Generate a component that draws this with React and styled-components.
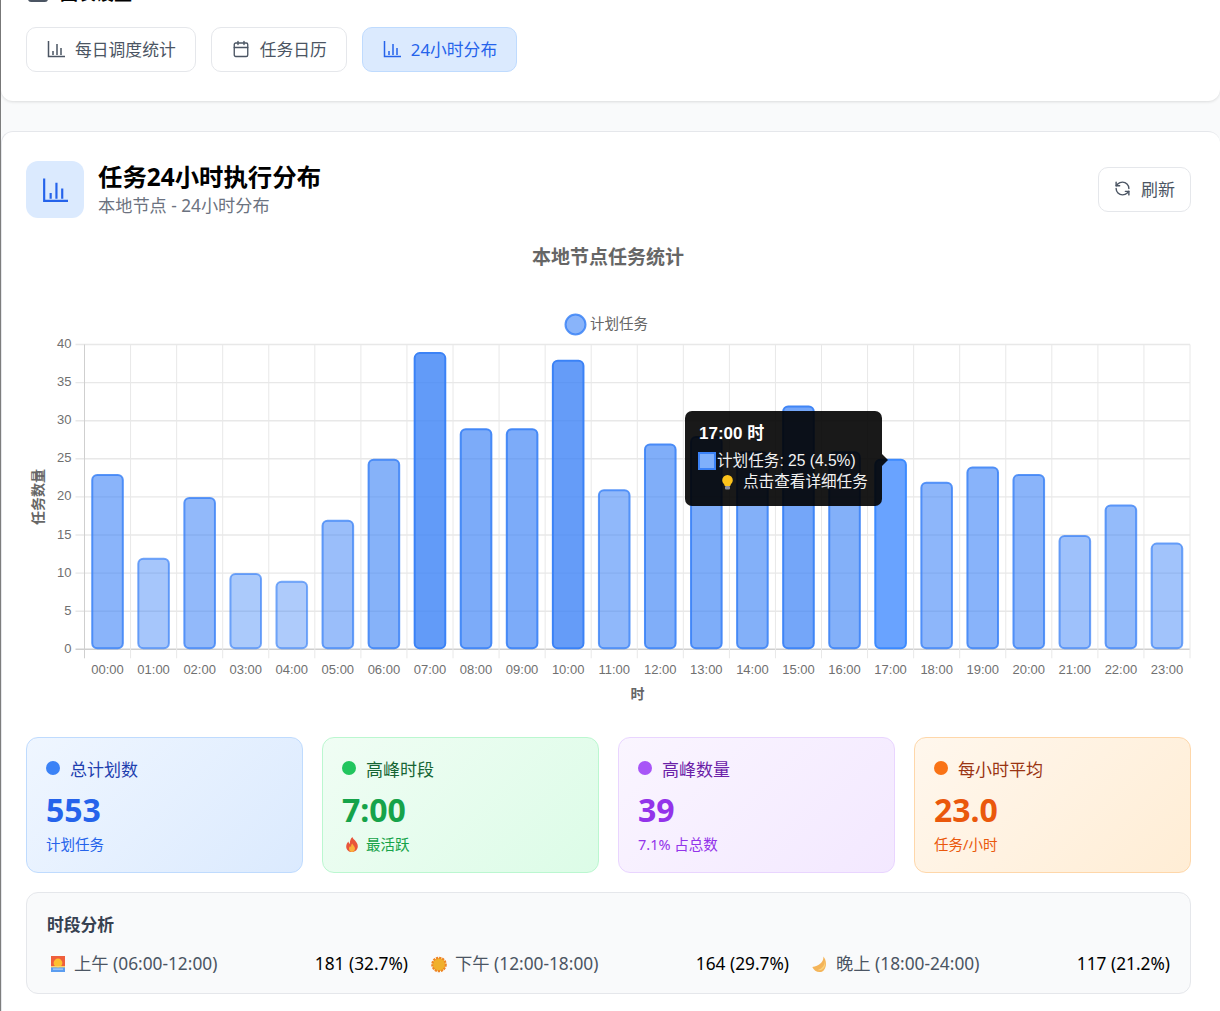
import styled, { createGlobalStyle } from 'styled-components';
import { Calendar, RefreshCcw } from 'lucide-react';

const FONT = '"Noto Sans", "Noto Sans CJK SC", sans-serif';
const CHART_FONT = '"Liberation Sans", "Noto Sans CJK SC", sans-serif';

const hours = [23, 12, 20, 10, 9, 17, 25, 39, 29, 29, 38, 21, 27, 28, 26, 32, 26, 25, 22, 24, 23, 15, 19, 14];
const ticks = [0, 5, 10, 15, 20, 25, 30, 35, 40];

const PLOT_LEFT = 84.5;
const PLOT_RIGHT = 1190;
const PLOT_TOP = 344.5;
const PLOT_BOTTOM = 649.3;
const COL = (PLOT_RIGHT - PLOT_LEFT) / 24;
const UNIT = (PLOT_BOTTOM - PLOT_TOP) / 40;

const stats = [
  { tone: 'blue', label: '总计划数', value: '553', note: '计划任务' },
  { tone: 'green', label: '高峰时段', value: '7:00', note: '最活跃', fire: true },
  { tone: 'purple', label: '高峰数量', value: '39', note: '7.1% 占总数' },
  { tone: 'orange', label: '每小时平均', value: '23.0', note: '任务/小时' },
];

const tones = {
  blue: { from: '#eff6ff', to: '#dbeafe', line: '#bfdbfe', dot: '#3b82f6', label: '#1e40af', value: '#2563eb' },
  green: { from: '#f0fdf4', to: '#dcfce7', line: '#bbf7d0', dot: '#22c55e', label: '#166534', value: '#16a34a' },
  purple: { from: '#faf5ff', to: '#f3e8ff', line: '#e9d5ff', dot: '#a855f7', label: '#6b21a8', value: '#9333ea' },
  orange: { from: '#fff7ed', to: '#ffedd5', line: '#fed7aa', dot: '#f97316', label: '#9a3412', value: '#ea580c' },
};

const periods = [
  { icon: 'sunrise', label: '上午 (06:00-12:00)', value: '181 (32.7%)' },
  { icon: 'sun', label: '下午 (12:00-18:00)', value: '164 (29.7%)' },
  { icon: 'moon', label: '晚上 (18:00-24:00)', value: '117 (21.2%)' },
];

function BarsIcon({ size = 18 }) {
  return (
    <svg width={size} height={size} viewBox="0 0 18 18" fill="none" stroke="currentColor" strokeWidth="1.5">
      <path d="M1.5 1v15.5H18" />
      <path d="M6 15v-4M10 15V4M14 15V8" />
    </svg>
  );
}

function Sunrise() {
  return (
    <svg width="14" height="16" viewBox="0 0 14 16">
      <rect width="14" height="16" fill="#ef5f3c" />
      <rect y="10" width="14" height="6" fill="#5b9df0" />
      <circle cx="7" cy="7" r="4.4" fill="#fdc02f" />
      <rect y="10" width="14" height="1.4" fill="#fbd36b" />
      <rect x="2" y="12.6" width="10" height="1" fill="#bfdcf8" />
    </svg>
  );
}

function Sun() {
  return (
    <svg width="16" height="17" viewBox="0 0 16 17">
      <circle cx="8" cy="8.5" r="6.6" fill="#f4b62e" stroke="#ee8524" strokeWidth="2.4" strokeDasharray="2.2 0.9" />
      <circle cx="8" cy="8.5" r="5.6" fill="#f0b02c" />
    </svg>
  );
}

function Moon() {
  return (
    <svg width="15" height="17" viewBox="0 0 15 17">
      <path d="M11.200.4c1.100 4.600-3.300 9.600-10.900 10.700 1.500 3.700 5.400 5.700 8.900 4.800C14.300 14.500 15.800 5 11.200.4z" fill="#f4b459" />
      <path d="M12.800 4c.6 4-2 8.600-7 10 3 1 6.300-.6 7.200-4.200.4-2 .3-4-.2-5.800z" fill="#f9d27d" />
    </svg>
  );
}

function Fire() {
  return (
    <FireIcon width="12" height="15" viewBox="1 0 12 15">
      <path d="M7.400 0c.6 2.600 5.400 4.600 5.400 9.200 0 3.300-2.600 5.800-5.800 5.800S1.200 12.600 1.200 9.400c0-2.300 1.200-3.800 2.200-5 .2 1.300.7 2 1.500 2.400C4.700 4 5.600 1.600 7.400 0z" fill="#e8553a" />
      <path d="M7.200 6.500c.4 1.500 2.800 2.500 2.800 5 0 1.900-1.300 3.500-3 3.500s-3-1.400-3-3.200c0-1.200.6-2 1.200-2.700.2.600.5 1 .9 1.200-.1-1.400.2-2.800 1.100-3.800z" fill="#fbb03b" />
    </FireIcon>
  );
}

function Bulb() {
  return (
    <svg width="11" height="15" viewBox="0 0 11 15">
      <path d="M5.500 0a5.300 5.300 0 0 1 5.300 5.300c0 2-1.200 3-2 4.300-.3.500-.4 1-.5 1.400H2.700c-.1-.5-.2-.9-.5-1.400C1.400 8.300.2 7.300.2 5.300A5.300 5.300 0 0 1 5.500 0z" fill="#fcc21b" />
      <rect x="3" y="11" width="5" height="3.400" rx="1" fill="#8a8fa0" />
    </svg>
  );
}

const periodIcons = { sunrise: Sunrise, sun: Sun, moon: Moon };

function HourChart() {
  return (
    <ChartSvg viewBox="26 240 1165 472">
      <ChartTitle x="608" y="263.500" textAnchor="middle">本地节点任务统计</ChartTitle>

      <circle cx="575.500" cy="324.500" r="10" fill="rgba(59,130,246,0.6)" stroke="rgba(59,130,246,0.85)" strokeWidth="2" />
      <LegendText x="590" y="328.500">计划任务</LegendText>

      {ticks.map((t) => {
        const y = PLOT_BOTTOM - t * UNIT;
        return (
          <g key={t}>
            <GridLine x1={PLOT_LEFT - 9} x2={PLOT_RIGHT} y1={y} y2={y} $axis={t === 0} $wide />
            <TickText x={PLOT_LEFT - 13} y={y + 3.500} textAnchor="end">{t}</TickText>
          </g>
        );
      })}
      {hours.map((_, i) => (
        <GridLine key={i} x1={PLOT_LEFT + i * COL} x2={PLOT_LEFT + i * COL} y1={PLOT_TOP} y2={PLOT_BOTTOM + 9} $axis={i === 0} />
      ))}
      <GridLine x1={PLOT_RIGHT} x2={PLOT_RIGHT} y1={PLOT_TOP} y2={PLOT_BOTTOM + 9} />

      {hours.map((v, i) => {
        const alpha = 0.3 + (0.5 * v) / 39;
        const hovered = i === 17;
        const cx = PLOT_LEFT + (i + 0.5) * COL;
        const top = PLOT_BOTTOM - v * UNIT;
        return (
          <g key={i}>
            <rect
              x={cx - 15.300}
              y={top + 1}
              width="30.600"
              height={v * UNIT - 2}
              rx="5"
              fill={hovered ? '#69a3ff' : `rgba(59,130,246,${alpha})`}
              stroke={hovered ? '#3c8aff' : `rgba(59,130,246,${Math.min(alpha + 0.25, 1)})`}
              strokeWidth="2"
            />
            <TickText x={cx} y="674" textAnchor="middle">{String(i).padStart(2, '0')}:00</TickText>
          </g>
        );
      })}

      <AxisTitle x="637.500" y="699" textAnchor="middle">时</AxisTitle>
      <AxisTitle textAnchor="middle" transform="translate(43 497) rotate(-90)">任务数量</AxisTitle>
    </ChartSvg>
  );
}

export default function App() {
  return (
    <>
      <GlobalStyle />
      <Page>
        <TopCard>
          <Heading>
            <HeadingIcon />
            图表设置
          </Heading>
          <Tabs>
            <Tab><BarsIcon />每日调度统计</Tab>
            <Tab><Calendar size={18} strokeWidth={1.800} />任务日历</Tab>
            <Tab $active><BarsIcon />24小时分布</Tab>
          </Tabs>
        </TopCard>

        <MainCard>
          <Header>
            <HeaderLeft>
              <IconBox><BarsIcon size={26} /></IconBox>
              <div>
                <Title>任务24小时执行分布</Title>
                <Subtitle>本地节点 - 24小时分布</Subtitle>
              </div>
            </HeaderLeft>
            <RefreshButton><RefreshCcw size={17} strokeWidth={2} />刷新</RefreshButton>
          </Header>

          <ChartWrap>
            <HourChart />
            <Tooltip>
              <TipTitle>17:00 时</TipTitle>
              <TipLine><TipSwatch />计划任务: 25 (4.5%)</TipLine>
              <TipHint><Bulb />点击查看详细任务</TipHint>
            </Tooltip>
          </ChartWrap>

          <StatGrid>
            {stats.map((s) => (
              <StatCard key={s.label} $tone={s.tone}>
                <StatLabel $tone={s.tone}><StatDot $tone={s.tone} />{s.label}</StatLabel>
                <StatValue $tone={s.tone}>{s.value}</StatValue>
                <StatNote $tone={s.tone}>{s.fire && <Fire />}{s.note}</StatNote>
              </StatCard>
            ))}
          </StatGrid>

          <Analysis>
            <AnalysisTitle>时段分析</AnalysisTitle>
            <PeriodGrid>
              {periods.map((p) => {
                const Icon = periodIcons[p.icon];
                return (
                  <Period key={p.icon}>
                    <PeriodLabel><PeriodIcon><Icon /></PeriodIcon>{p.label}</PeriodLabel>
                    <PeriodValue>{p.value}</PeriodValue>
                  </Period>
                );
              })}
            </PeriodGrid>
          </Analysis>
        </MainCard>
      </Page>
    </>
  );
}

const GlobalStyle = createGlobalStyle`
  html, body {
    margin: 0;
    height: 100%;
    overflow: hidden;
    background: #f9fafb;
  }
  body {
    font-family: ${FONT};
  }
  * {
    box-sizing: border-box;
  }
`;

// the screenshot is scrolled a bit, so the page starts above the window
const Page = styled.div`
  width: 1220px;
  margin-top: -50px;
  border-left: 1px solid #7d7d7d;
  background: #f9fafb;
  display: flex;
  flex-direction: column;
  gap: 30px;
`;

const TopCard = styled.section`
  height: 151px;
  padding: 27px 28px 0 25px;
  background: #fff;
  border-radius: 0 0 12px 12px;
  box-shadow: 0 1px 3px rgba(0, 0, 0, 0.12);
`;

const Heading = styled.h2`
  margin: 0 0 18px;
  height: 32px;
  display: flex;
  align-items: center;
  gap: 12px;
  font-size: 18px;
  line-height: 32px;
  font-weight: 700;
  color: #000;
`;

const HeadingIcon = styled.span`
  width: 20px;
  height: 18px;
  margin-left: 2px;
  border: 2px solid #4b5563;
  border-radius: 3px;
`;

const Tabs = styled.div`
  display: flex;
  gap: 15px;
`;

const Tab = styled.button`
  height: 45px;
  padding: 0 19px 1px 20px;
  display: flex;
  align-items: center;
  gap: 10px;
  font-family: ${FONT};
  font-size: 16.800px;
  border-radius: 10px;
  border: 1px solid ${(p) => (p.$active ? '#bfdbfe' : '#e5e7eb')};
  background: ${(p) => (p.$active ? '#dbeafe' : '#fff')};
  color: ${(p) => (p.$active ? '#2563eb' : '#4b5563')};
`;

const MainCard = styled.section`
  padding: 29px 29px 17px 24px;
  background: #fff;
  border: 1px solid #e5e7eb;
  border-right: 0;
  border-radius: 12px 12px 0 0;
`;

const Header = styled.header`
  height: 57px;
  display: flex;
  justify-content: space-between;
  align-items: flex-start;
`;

const HeaderLeft = styled.div`
  display: flex;
  align-items: center;
  gap: 14px;
`;

const IconBox = styled.div`
  width: 58px;
  height: 57px;
  border-radius: 12px;
  background: #dbeafe;
  color: #2563eb;
  display: flex;
  align-items: center;
  justify-content: center;
`;

const Title = styled.h1`
  margin: 0;
  font-size: 24.400px;
  line-height: 32px;
  font-weight: 700;
  color: #000;
`;

const Subtitle = styled.p`
  margin: 1px 0 0;
  font-size: 17.200px;
  line-height: 24px;
  color: #6b7280;
`;

const RefreshButton = styled.button`
  width: 93px;
  height: 45px;
  margin-top: 6px;
  padding: 0 0 3px;
  display: flex;
  align-items: center;
  justify-content: center;
  gap: 10px;
  font-family: ${FONT};
  font-size: 17px;
  color: #4b5563;
  background: #fff;
  border: 1px solid #e5e7eb;
  border-radius: 10px;
`;

const ChartWrap = styled.div`
  position: relative;
  margin-top: 22px;
  height: 472px;
`;

const ChartSvg = styled.svg`
  display: block;
  width: 1165px;
  height: 472px;
`;

const ChartTitle = styled.text`
  font-family: ${CHART_FONT};
  font-size: 19px;
  font-weight: 700;
  fill: #666;
`;

const LegendText = styled.text`
  font-family: ${CHART_FONT};
  font-size: 14.500px;
  fill: #666;
`;

const TickText = styled.text`
  font-family: ${CHART_FONT};
  font-size: 13px;
  fill: #707070;
`;

const AxisTitle = styled.text`
  font-family: ${CHART_FONT};
  font-size: 14px;
  font-weight: 700;
  fill: #666;
`;

const GridLine = styled.line`
  stroke: ${(p) => (p.$axis ? '#cfcfcf' : '#e8e8e8')};
  stroke-width: ${(p) => (p.$wide ? 1.400 : 1)};
`;

const Tooltip = styled.div`
  position: absolute;
  left: 659px;
  top: 171px;
  width: 197px;
  height: 95px;
  padding: 13px 0 0 14px;
  background: rgba(0, 0, 0, 0.9);
  border-radius: 7px;
  color: #fff;
  font-family: ${CHART_FONT};
  font-size: 15.600px;

  &::after {
    content: '';
    position: absolute;
    left: 100%;
    top: 43px;
    border: 6px solid transparent;
    border-left-color: rgba(0, 0, 0, 0.9);
  }
`;

const TipTitle = styled.div`
  font-weight: 700;
  font-size: 17px;
  line-height: 20px;
  margin-bottom: 7px;
`;

const TipLine = styled.div`
  display: flex;
  align-items: center;
  line-height: 20px;
  color: #f2f2f2;
  margin-left: -1px;
`;

const TipSwatch = styled.span`
  width: 18px;
  height: 18px;
  margin-right: 1px;
  background: #7fb0fb;
  border: 2px solid #3b82f6;
`;

const TipHint = styled.div`
  display: flex;
  align-items: center;
  gap: 10px;
  margin: 1px 0 0 23px;
  line-height: 20px;
  color: #f2f2f2;
`;

const StatGrid = styled.div`
  margin-top: 25px;
  display: grid;
  grid-template-columns: repeat(4, 277px);
  column-gap: 19px;
`;

const StatCard = styled.div`
  height: 136px;
  padding: 18px 19px 0;
  border-radius: 12px;
  border: 1px solid ${(p) => tones[p.$tone].line};
  background: linear-gradient(135deg, ${(p) => tones[p.$tone].from}, ${(p) => tones[p.$tone].to});
`;

const StatLabel = styled.div`
  display: flex;
  align-items: center;
  gap: 10px;
  height: 24px;
  font-size: 17px;
  color: ${(p) => tones[p.$tone].label};
`;

const StatDot = styled.span`
  width: 14px;
  height: 14px;
  border-radius: 50%;
  background: ${(p) => tones[p.$tone].dot};
`;

const StatValue = styled.div`
  margin-top: 10px;
  height: 40px;
  font-size: 32px;
  line-height: 40px;
  font-weight: 700;
  color: ${(p) => tones[p.$tone].value};
`;

const StatNote = styled.div`
  margin-top: 3px;
  display: flex;
  align-items: center;
  gap: 8px;
  font-size: 14.500px;
  line-height: 22px;
  color: ${(p) => tones[p.$tone].value};
`;

const FireIcon = styled.svg`
  margin-left: 4px;
`;

const Analysis = styled.div`
  margin-top: 19px;
  height: 102px;
  padding: 20px;
  background: #f9fafb;
  border: 1px solid #e5e7eb;
  border-radius: 12px;
`;

const AnalysisTitle = styled.h3`
  margin: 0 0 14px;
  font-size: 16.800px;
  line-height: 24px;
  font-weight: 700;
  color: #374151;
`;

const PeriodGrid = styled.div`
  display: grid;
  grid-template-columns: repeat(3, 1fr);
  column-gap: 20px;
`;

const Period = styled.div`
  display: flex;
  justify-content: space-between;
  align-items: center;
  font-size: 17.300px;
  line-height: 26px;
`;

const PeriodLabel = styled.span`
  display: flex;
  align-items: center;
  gap: 6px;
  color: #4b5563;
`;

const PeriodIcon = styled.span`
  width: 21px;
  display: flex;
  justify-content: center;
`;

const PeriodValue = styled.span`
  color: #000;
`;
